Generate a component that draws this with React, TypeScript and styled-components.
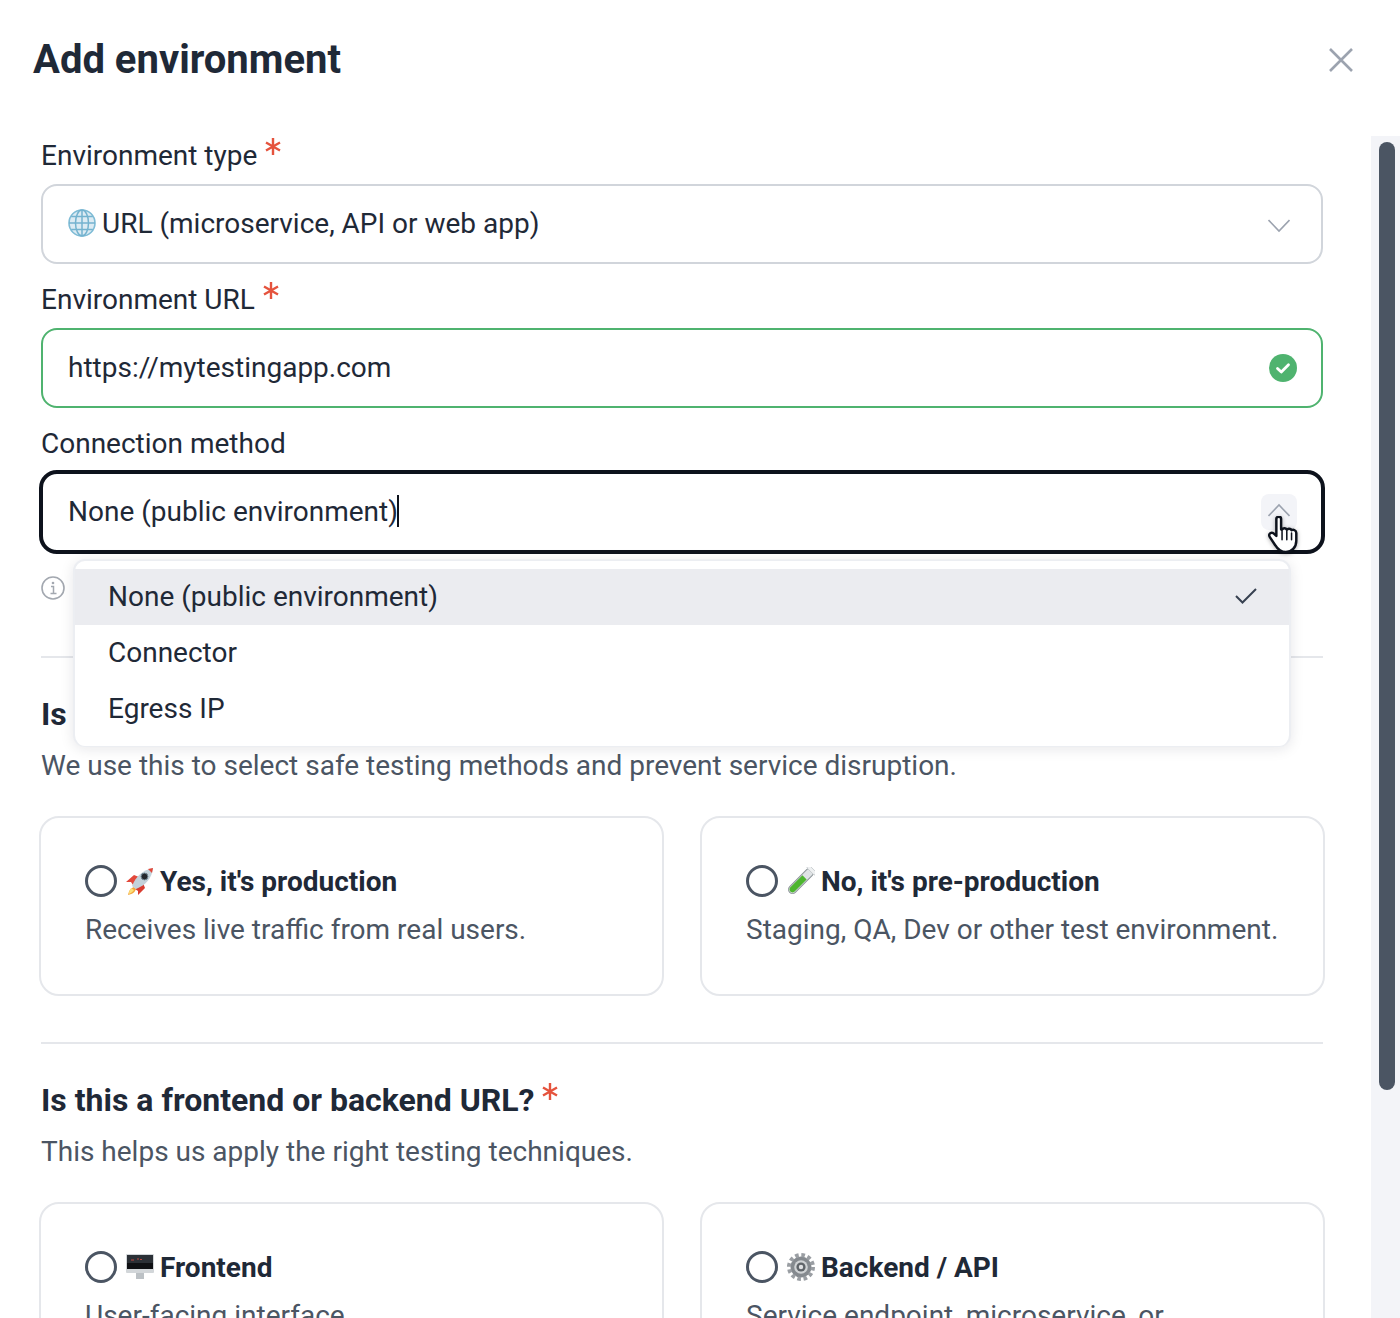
import styled, { createGlobalStyle } from "styled-components";
import { useId } from "react";

const GlobalStyle = createGlobalStyle`
  html, body {
    margin: 0;
    padding: 0;
    background: #ffffff;
  }
  body {
    font-family: Roboto, "Liberation Sans", sans-serif;
    color: #1f2937;
  }
  * {
    box-sizing: border-box;
  }
`;

const Modal = styled.div`
  width: 1400px;
  height: 1318px;
  overflow: hidden;
  display: flex;
  flex-direction: column;
  background: #ffffff;
`;

const Header = styled.header`
  height: 120px;
  flex: none;
  display: flex;
  justify-content: space-between;
  align-items: flex-start;
  padding: 37px 47px 0 33px;
`;

const Title = styled.h1`
  margin: 0;
  font-size: 40px;
  line-height: 46px;
  font-weight: 700;
  color: #1f2937;
`;

const CloseButton = styled.button`
  border: 0;
  background: none;
  padding: 0;
  margin-top: 11px;
  width: 24px;
  height: 24px;
  display: flex;
`;

const Body = styled.div`
  flex: 1;
  min-height: 0;
  display: flex;
`;

const Content = styled.main`
  flex: 1;
  padding: 0 48px 0 41px;
`;

const Track = styled.div`
  width: 29px;
  flex: none;
  margin-top: 16px;
  padding: 6px 5px 0 8px;
  background: #f3f4f8;
`;

const Thumb = styled.div`
  height: 948px;
  border-radius: 8px;
  background: #4b5563;
`;

const Label = styled.label`
  display: flex;
  align-items: center;
  gap: 8px;
  padding: 16px 0 8px;
  line-height: 40px;
  font-size: 28px;
  color: #1f2937;
`;

const Star = styled.svg<{ $big?: boolean }>`
  width: 16px;
  height: 17px;
  flex: none;
  margin-top: ${({ $big }) => ($big ? "-18px" : "-20px")};
`;

const Box = styled.div<{ $state?: "valid" | "focus" }>`
  height: ${({ $state }) => ($state === "focus" ? "84px" : "80px")};
  margin: ${({ $state }) => ($state === "focus" ? "-2px" : "0")};
  display: flex;
  align-items: center;
  padding: 0 24px 0 25px;
  font-size: 28px;
  color: #1f2937;
  background: #ffffff;
  border-radius: ${({ $state }) => ($state === "focus" ? "18px" : "16px")};
  border: ${({ $state }) =>
    $state === "focus"
      ? "4px solid #0d121c"
      : $state === "valid"
        ? "2px solid #4fb36f"
        : "2px solid #d1d5db"};
`;

const BoxText = styled.span`
  flex: 1;
  display: flex;
  align-items: center;
  gap: 6px;
  padding-bottom: 2px;
  white-space: nowrap;
`;

const TypedText = styled.span`
  display: inline-flex;
  align-items: center;
`;

const Caret = styled.i`
  display: block;
  width: 2px;
  height: 32px;
  margin-left: -1px;
  background: #0d121c;
`;

const Emoji = styled.svg`
  width: 28px;
  height: 28px;
  flex: none;
`;

const ChevronSlot = styled.span<{ $hover?: boolean }>`
  width: 36px;
  height: 36px;
  flex: none;
  display: flex;
  align-items: center;
  justify-content: center;
  border-radius: 8px;
  background: ${({ $hover }) => ($hover ? "#f3f4f8" : "transparent")};
`;

const ChevronIcon = styled.svg<{ $up?: boolean }>`
  width: 22px;
  height: 14px;
  margin-top: ${({ $up }) => ($up ? "-4px" : "3px")};
`;

const SelectWrap = styled.div`
  position: relative;
`;

const Pointer = styled.svg`
  position: absolute;
  right: 24px;
  top: 46px;
  width: 32px;
  height: 38px;
  z-index: 3;
  filter: drop-shadow(0 1px 2px rgba(0, 0, 0, 0.3));
`;

const Menu = styled.ul`
  position: absolute;
  top: 89px;
  left: 32px;
  right: 32px;
  margin: 0;
  padding: 8px 0 9px;
  list-style: none;
  background: #ffffff;
  border: 2px solid #eceef2;
  border-bottom-width: 1px;
  border-radius: 12px;
  box-shadow: 0 2px 14px rgba(17, 24, 39, 0.1);
  z-index: 2;
`;

const MenuItem = styled.li<{ $selected?: boolean }>`
  height: 56px;
  display: flex;
  align-items: center;
  justify-content: space-between;
  padding: 0 32px 2px 33px;
  font-size: 28px;
  color: #1f2937;
  background: ${({ $selected }) => ($selected ? "#ebecf0" : "transparent")};
`;

const HintRow = styled.div`
  margin-top: 24px;
  height: 24px;
  display: flex;
`;

const Divider = styled.hr<{ $top: number }>`
  margin: ${({ $top }) => $top}px 0 0;
  border: 0;
  height: 2px;
  background: #e5e7eb;
`;

const Heading = styled.h2`
  margin: 36px 0 0;
  display: flex;
  align-items: center;
  gap: 8px;
  font-size: 32px;
  line-height: 40px;
  font-weight: 700;
  color: #1f2937;
`;

const SubText = styled.p`
  margin: 12px 0 0;
  font-size: 28px;
  line-height: 40px;
  color: #4b5563;
`;

const CardGrid = styled.div`
  margin: 30px -2px 0 -2px;
  display: grid;
  grid-template-columns: 625px 625px;
  gap: 36px;
`;

const Card = styled.div`
  height: 180px;
  padding: 43px 30px 0 44px;
  border: 2px solid #e5e7eb;
  border-radius: 20px;
  background: #ffffff;
`;

const CardTitle = styled.div`
  display: flex;
  align-items: center;
  height: 40px;
  font-size: 28px;
  font-weight: 700;
  color: #1f2937;
  white-space: nowrap;
`;

const Radio = styled.span`
  width: 32px;
  height: 32px;
  flex: none;
  margin-right: 9px;
  border: 3px solid #4b5563;
  border-radius: 50%;
`;

const CardEmoji = styled(Emoji)`
  margin-right: 6px;
`;

const CardText = styled.p`
  margin: 9px 0 0;
  font-size: 28px;
  line-height: 40px;
  color: #4b5563;
  white-space: nowrap;
`;

const Asterisk = ({ big }: { big?: boolean }) => (
  <Star $big={big} viewBox="0 0 16 17" fill="none" stroke="#e5533d" strokeWidth="2.4">
    <path d="M8 0v17M1 4.500l14 8M15 4.500l-14 8" />
  </Star>
);

const Chevron = ({ up }: { up?: boolean }) => (
  <ChevronIcon $up={up} viewBox="0 0 22 14" fill="none" stroke="#9ca3af" strokeWidth="1.6">
    <path d={up ? "M.5 13L11 2l10.500 11" : "M.5 1L11 12 21.500 1"} />
  </ChevronIcon>
);

const Globe = () => (
  <Emoji viewBox="0 0 28 28" fill="none">
    <circle cx="14" cy="14" r="13" fill="#dcebf3" stroke="#7fbcd6" strokeWidth="1.6" />
    <g stroke="#74b3cf" strokeWidth="1.5">
      <ellipse cx="14" cy="14" rx="6.500" ry="13" />
      <path d="M14 1v26M1 14h26M3.200 7.500h21.600M3.200 20.500h21.600" />
    </g>
  </Emoji>
);

const Rocket = () => {
  const id = useId();
  return (
    <CardEmoji viewBox="0 0 28 28" fill="none">
      <defs>
        <linearGradient id={id} x1="9" y1="7" x2="19" y2="18">
          <stop offset="0" stopColor="#c3d2da" />
          <stop offset="0.55" stopColor="#8fa5b2" />
          <stop offset="1" stopColor="#4f5c66" />
        </linearGradient>
      </defs>
      <path d="M0 15l8-7 5 2-6 8-2-3-5 0z" fill="#e2483a" />
      <path d="M12 28l7-7-2-5-8 6 3 2 0 4z" fill="#d93c30" />
      <path d="M8 20c-3 1-5 3-6 8 5-1 7-3 8-6z" fill="#f3a63c" />
      <path d="M5 21c-1 2-2 3-2 6 3-1 4-3 5-4z" fill="#fbe07b" />
      <path d="M6 19C10 9 17 3 27 1c-1 10-7 17-17 21z" fill={`url(#${id})`} />
      <circle cx="18.500" cy="9.500" r="3.400" fill="#23272c" stroke="#6f8591" strokeWidth="1" />
      <path d="M22 2l5-1-1 5z" fill="#e2483a" />
    </CardEmoji>
  );
};

const TestTube = () => (
  <CardEmoji viewBox="0 0 28 28" fill="none">
    <g transform="rotate(45 14 14)">
      <rect x="10" y="-2" width="8" height="32" rx="4" fill="#dfe3e5" stroke="#8d9599" strokeWidth="1" />
      <path d="M11 9h6v17c0 4-6 4-6 0z" fill="#4db52f" />
      <rect x="8.500" y="-3" width="11" height="3.500" rx="1" fill="#eef0f1" stroke="#b5bbbe" strokeWidth=".6" />
    </g>
  </CardEmoji>
);

const Monitor = () => {
  const id = useId();
  return (
    <CardEmoji viewBox="0 0 28 28" fill="none">
      <defs>
        <linearGradient id={id} x1="0" y1="3" x2="28" y2="14">
          <stop offset="0" stopColor="#2b3036" />
          <stop offset="1" stopColor="#646b73" />
        </linearGradient>
      </defs>
      <rect x="0" y="1" width="28" height="19" rx="1" fill="#d2d6d9" />
      <rect x="1" y="2" width="26" height="14" fill={`url(#${id})`} />
      <rect x="1" y="10" width="26" height="6" fill="#0f1114" />
      <path d="M5 7h3M11 6h2M14 6.500h2" stroke="#c0473f" strokeWidth="1" />
      <rect x="10" y="20" width="8" height="6" fill="#bcc1c5" />
    </CardEmoji>
  );
};

const Gear = () => (
  <CardEmoji viewBox="0 0 28 28" fill="none">
    <circle cx="14" cy="14" r="10.500" fill="#858a8f" />
    <circle cx="14" cy="14" r="12" stroke="#9a9ea3" strokeWidth="4" strokeDasharray="3.600 2.680" />
    <circle cx="14" cy="14" r="6.800" fill="#cfd2d4" />
    <circle cx="14" cy="14" r="4.600" fill="#5f6469" />
    <circle cx="14" cy="14" r="2.200" fill="#dfe1e3" />
  </CardEmoji>
);

export default function App() {
  return (
    <Modal>
      <GlobalStyle />
      <Header>
        <Title>Add environment</Title>
        <CloseButton aria-label="Close">
          <svg width="24" height="24" viewBox="0 0 24 24" fill="none" stroke="#9ca3af" strokeWidth="2.6">
            <path d="M1 1l22 22M23 1L1 23" />
          </svg>
        </CloseButton>
      </Header>
      <Body>
        <Content>
          <Label>
            Environment type <Asterisk />
          </Label>
          <Box>
            <BoxText>
              <Globe />
              URL (microservice, API or web app)
            </BoxText>
            <ChevronSlot>
              <Chevron />
            </ChevronSlot>
          </Box>

          <Label>
            Environment URL <Asterisk />
          </Label>
          <Box $state="valid">
            <BoxText>https://mytestingapp.com</BoxText>
            <svg width="28" height="28" viewBox="0 0 28 28">
              <circle cx="14" cy="14" r="14" fill="#4fb36f" />
              <path d="M8.500 14.500l3.800 3.600 7.200-7.400" fill="none" stroke="#fff" strokeWidth="2.800" strokeLinecap="round" strokeLinejoin="round" />
            </svg>
          </Box>

          <Label>Connection method</Label>
          <SelectWrap>
            <Box $state="focus">
              <BoxText>
                <TypedText>
                  None (public environment)
                  <Caret />
                </TypedText>
              </BoxText>
              <ChevronSlot $hover>
                <Chevron up />
              </ChevronSlot>
            </Box>
            <Pointer viewBox="0 0 32 40">
              <path
                d="M9 3c0-3 5-3 5 0v11l1 .5c1-2 4-2 5 0 1-1.500 4-1.500 5 .5 2-1 5 0 5 3v8c0 7-5 12-11 12-5 0-8-2-11-7l-6-9c-2-3 2-6 5-3l2 2z"
                fill="#ffffff"
                stroke="#0d121c"
                strokeWidth="2.600"
                strokeLinejoin="round"
              />
              <path d="M15 16v9M20 16v9M25 18v7" stroke="#0d121c" strokeWidth="1.600" strokeLinecap="round" />
            </Pointer>
            <Menu>
              <MenuItem $selected>
                None (public environment)
                <svg width="22" height="16" viewBox="0 0 22 16" fill="none" stroke="#374151" strokeWidth="2">
                  <path d="M1 8l6.500 6.500L21 1" />
                </svg>
              </MenuItem>
              <MenuItem>Connector</MenuItem>
              <MenuItem>Egress IP</MenuItem>
            </Menu>
          </SelectWrap>
          <HintRow>
            <svg width="24" height="24" viewBox="0 0 24 24" fill="none">
              <circle cx="12" cy="12" r="11" stroke="#a3a8b0" strokeWidth="1.600" />
              <path d="M10 10.500h2.500v7M9.500 17.500h6" stroke="#a3a8b0" strokeWidth="1.500" />
              <circle cx="12" cy="7" r="1.300" fill="#a3a8b0" />
            </svg>
          </HintRow>

          <Divider $top={56} />
          <Heading>
            Is this a production environment? <Asterisk big />
          </Heading>
          <SubText>We use this to select safe testing methods and prevent service disruption.</SubText>
          <CardGrid>
            <Card>
              <CardTitle>
                <Radio />
                <Rocket />
                Yes, it's production
              </CardTitle>
              <CardText>Receives live traffic from real users.</CardText>
            </Card>
            <Card>
              <CardTitle>
                <Radio />
                <TestTube />
                No, it's pre-production
              </CardTitle>
              <CardText>Staging, QA, Dev or other test environment.</CardText>
            </Card>
          </CardGrid>

          <Divider $top={46} />
          <Heading>
            Is this a frontend or backend URL? <Asterisk big />
          </Heading>
          <SubText>This helps us apply the right testing techniques.</SubText>
          <CardGrid>
            <Card>
              <CardTitle>
                <Radio />
                <Monitor />
                Frontend
              </CardTitle>
              <CardText>User-facing interface</CardText>
            </Card>
            <Card>
              <CardTitle>
                <Radio />
                <Gear />
                Backend / API
              </CardTitle>
              <CardText>Service endpoint, microservice, or</CardText>
            </Card>
          </CardGrid>
        </Content>
        <Track>
          <Thumb />
        </Track>
      </Body>
    </Modal>
  );
}
